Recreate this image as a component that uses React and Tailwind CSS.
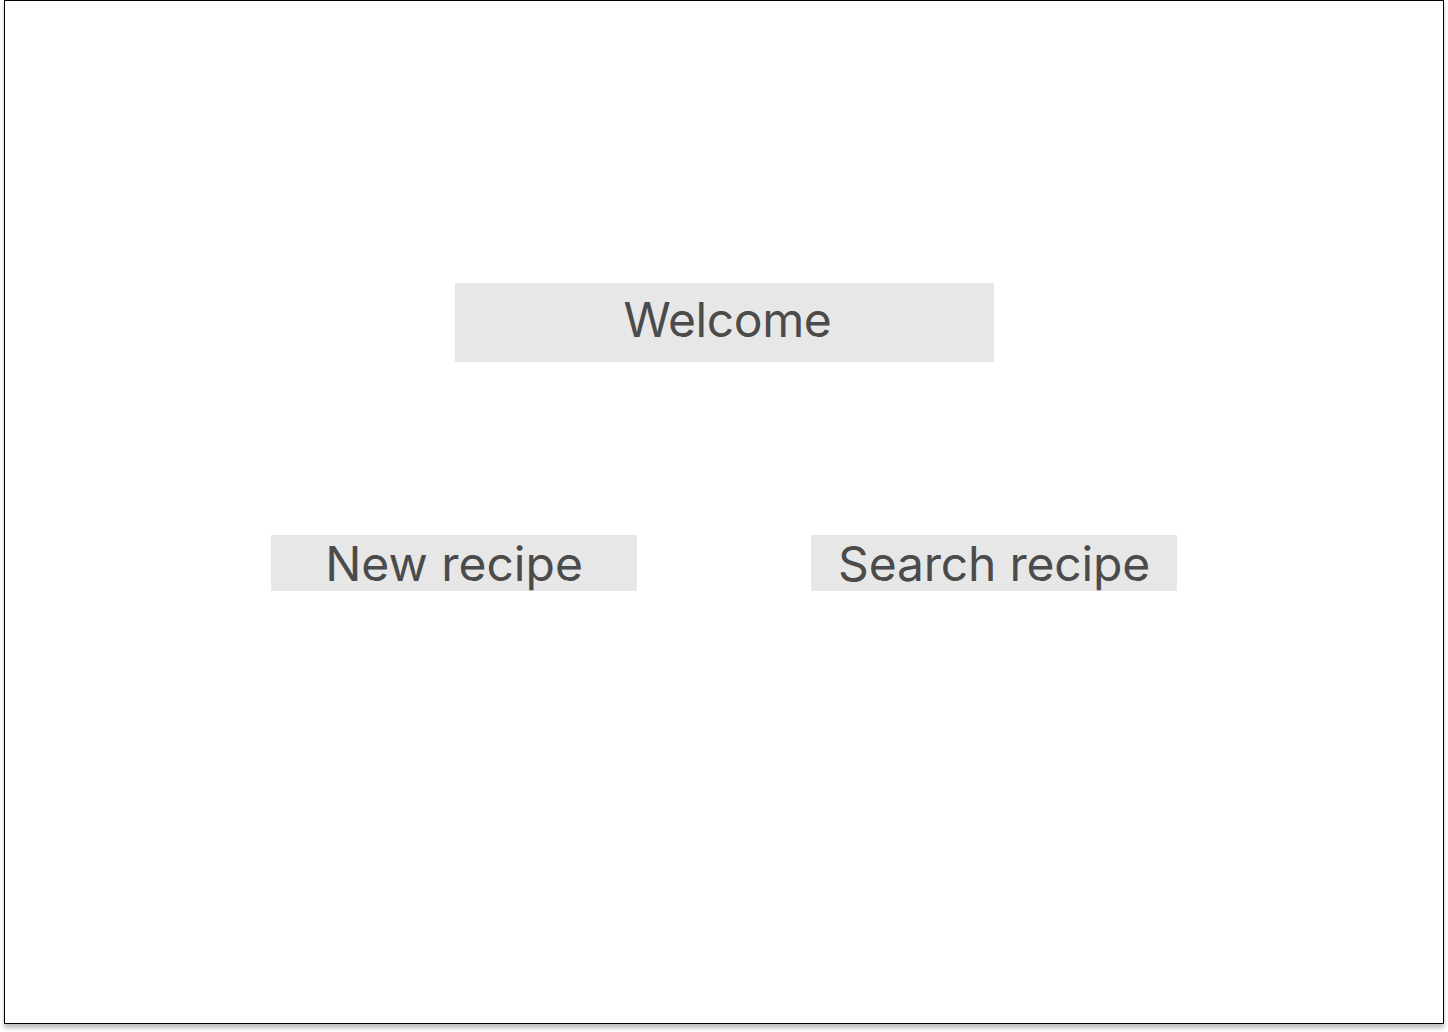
export default function App() {
  return (
    <div className="w-[1448px] h-[1032px] bg-white font-['Inter',sans-serif] text-[#4b4b4b]">
      <div className="ml-[4px] w-[1440px] h-[1024px] border border-black bg-white shadow-[0_4px_4px_rgba(0,0,0,0.25)] flex flex-col items-center">
        <div className="mt-[282px] w-[539px] h-[79px] bg-[#e7e7e7] pt-[8px] pl-[7px] text-center text-[48px] leading-[58px] tracking-[-0.4px]">
          Welcome
        </div>

        <div className="mt-[173px] flex gap-[174px]">
          <button className="w-[366px] h-[56px] bg-[#e7e7e7] text-[48px] leading-[58px] text-center">
            New recipe
          </button>
          <button className="w-[366px] h-[56px] bg-[#e7e7e7] text-[48px] leading-[58px] text-center tracking-[-0.2px]">
            Search recipe
          </button>
        </div>
      </div>
    </div>
  );
}
